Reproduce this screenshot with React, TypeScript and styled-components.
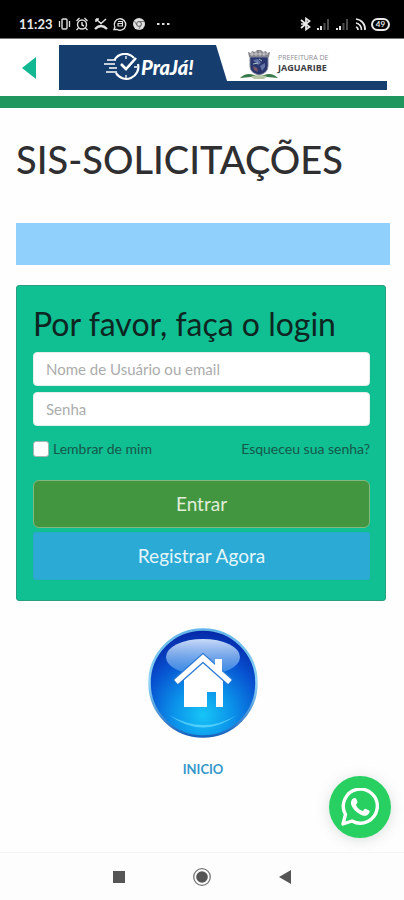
import React from "react";
import styled, { createGlobalStyle } from "styled-components";

const GlobalStyle = createGlobalStyle`
  *, *::before, *::after { box-sizing: border-box; }
  body {
    margin: 0;
    background: #fefefe;
    color: #2f2f31;
    font-family: Lato, "Open Sans", sans-serif;
  }
`;

const Screen = styled.div`
  min-height: 100vh;
  display: flex;
  flex-direction: column;
`;

const StatusBar = styled.div`
  height: 39px;
  padding: 10px 14px 0 19px;
  display: flex;
  align-items: center;
  justify-content: space-between;
  background: #000;
  border-bottom: 1px solid #777;
  color: #e8e8e8;
`;

const StatusGroup = styled.div<{ $gap: number }>`
  display: flex;
  align-items: center;
  gap: ${(p) => p.$gap}px;
`;

const Clock = styled.time`
  font: 700 13px/16px Lato, sans-serif;
`;

const Header = styled.header`
  height: 69px;
  padding: 6px 17px 0 20px;
  display: flex;
  gap: 21px;
  background: #fff;
  border-bottom: 12px solid #20965f;
`;

const BackButton = styled.button`
  width: 18px;
  height: 45px;
  padding: 0;
  border: 0;
  background: none;
  display: flex;
  align-items: center;
`;

const Banner = styled.a`
  flex: 1;
  height: 45px;
  display: flex;
  background: #fff;
  border-bottom: 9px solid #153e6f;
  text-decoration: none;
`;

const Brand = styled.span`
  flex: 0 0 168px;
  padding: 8px 0 0 44px;
  display: flex;
  align-items: center;
  gap: 1px;
  background: #153e6f;
  clip-path: polygon(0 0, 157px 0, 100% 100%, 0 100%);
  color: #fff;
`;

const BrandName = styled.span`
  font: italic 900 20px/28px Lato, sans-serif;
`;

const City = styled.span`
  padding: 5px 0 0 13px;
  display: flex;
  align-items: flex-start;
`;

const CityName = styled.span`
  padding-top: 4px;
  display: flex;
  flex-direction: column;
  font: 700 9px/12px "Open Sans", sans-serif;
  color: #3c3c44;
  white-space: nowrap;
`;

const CityKind = styled.span`
  font: 400 7px/10px "Open Sans", sans-serif;
  height: 8px;
  line-height: 8px;
  color: #8d8d95;
`;

const Main = styled.main`
  flex: 1;
  padding: 27px 14px 14px 16px;
  display: flex;
  flex-direction: column;
`;

const PageTitle = styled.h1`
  margin: 0;
  font: 500 38px/48px Lato, sans-serif;
  color: #2f2f31;
  white-space: nowrap;
`;

const Notice = styled.div`
  height: 42px;
  margin-top: 40px;
  background: #8fd0fc;
`;

const LoginCard = styled.form`
  margin: 20px 4px 0 0;
  padding: 18px 15px 20px 16px;
  display: flex;
  flex-direction: column;
  background: #10bf92;
  border: 1px solid #26a07e;
  border-radius: 3px;
`;

const CardTitle = styled.h2`
  margin: 0 0 8px;
  font: 400 32px/40px Lato, sans-serif;
  color: #0d2622;
  white-space: nowrap;
`;

const Field = styled.input`
  width: 100%;
  height: 34px;
  margin-bottom: 6px;
  padding: 0 12px;
  border: 1px solid #e4efea;
  border-radius: 4px;
  background: #fff;
  font: 400 15px/20px Lato, sans-serif;
  color: #333;
  &::placeholder { color: #acacac; opacity: 1; }
`;

const Options = styled.div`
  margin: 6px 0 20px;
  height: 22px;
  display: flex;
  align-items: center;
  justify-content: space-between;
  font: 400 14px/18px Lato, sans-serif;
  color: #15584a;
`;

const Remember = styled.label`
  display: flex;
  align-items: center;
  gap: 4px;
`;

const CheckBox = styled.input`
  appearance: none;
  width: 16px;
  height: 16px;
  margin: 0;
  border: 1px solid #a6b5b0;
  border-radius: 3px;
  background: #fff;
  &:checked { background: #15584a; }
`;

const ForgotLink = styled.a`
  color: inherit;
  text-decoration: none;
`;

const ActionButton = styled.button<{ $primary?: boolean }>`
  height: 48px;
  margin-top: ${(p) => (p.$primary ? 0 : 4)}px;
  border: 1px solid ${(p) => (p.$primary ? "#82b97d" : "#2aa9c8")};
  border-radius: ${(p) => (p.$primary ? 6 : 2)}px;
  background: ${(p) => (p.$primary ? "#439640" : "#2aaad4")};
  color: ${(p) => (p.$primary ? "#e0eeda" : "#e4f5fb")};
  font: 400 19px/24px Lato, sans-serif;
`;

const HomeLink = styled.a`
  align-self: center;
  margin-top: 26px;
  display: flex;
  flex-direction: column;
  align-items: center;
  gap: 21px;
  font: 700 13px/18px Lato, sans-serif;
  color: #3598cb;
  text-decoration: none;
`;

const ChatButton = styled.a`
  position: fixed;
  right: 13px;
  bottom: 62px;
  width: 62px;
  height: 62px;
  display: flex;
  align-items: center;
  justify-content: center;
  border-radius: 50%;
  background: #28d062;
  box-shadow: 0 2px 14px rgba(60, 80, 80, 0.18);
`;

const NavBar = styled.nav`
  height: 48px;
  display: flex;
  align-items: center;
  justify-content: center;
  gap: 65px;
  background: #fdfdfd;
  border-top: 1px solid #f5f5f5;
`;

const NavButton = styled.button`
  width: 18px;
  height: 20px;
  padding: 0;
  border: 0;
  background: none;
  display: flex;
  align-items: center;
  justify-content: center;
`;

const Signal = () => (
  <svg width="15" height="13" viewBox="0 0 15 13" aria-hidden="true">
    <path d="M2 12v-2M5 12V8" stroke="#e8e8e8" strokeWidth="2" />
    <path d="M8.500 12V5M12 12V1" stroke="#4c4c4c" strokeWidth="2" />
  </svg>
);

const StatusLeftIcons = () => (
  <svg width="116" height="16" viewBox="0 0 116 16" fill="none" stroke="#e0e0e0" strokeWidth="1.400" aria-hidden="true">
    <rect x="6" y="3" width="5" height="10" rx="1" />
    <path d="M3.500 5v6M13.500 5v6" strokeWidth="1.300" />
    <circle cx="26" cy="8.500" r="4.500" />
    <path d="M26 6v3l2 1M20.500 5l3-3M31.500 5l-3-3M22.500 12l-2 2M29.500 12l2 2" />
    <path d="M39 13q6-6 12 0" strokeWidth="2.400" />
    <path d="M40 3l5 4.500L50 3M40 3h3M40 3v3" strokeWidth="1.500" />
    <path d="M58 13.500l.9-2.400a5.700 5.700 0 1 1 2.300 2.400z" />
    <path d="M62 5.500h4.500v2H62v2.500h4.500V7.500" strokeWidth="1.200" />
    <circle cx="83" cy="8" r="6" fill="#e0e0e0" stroke="none" />
    <circle cx="83" cy="8" r="2.400" fill="#e0e0e0" stroke="#555" strokeWidth="1" />
    <path d="M83 5.500h5M80.800 9.200L78.500 5M85 9.500l-2.500 4" stroke="#666" strokeWidth=".8" />
    <path d="M101 8h2.500M106 8h2.500M111 8h2.500" strokeWidth="2" />
  </svg>
);

const BluetoothIcon = () => (
  <svg width="12" height="14" viewBox="0 0 12 14" fill="none" stroke="#e8e8e8" strokeWidth="1.700" aria-hidden="true">
    <path d="M1 3l8.500 7L6 12.500v-11L9.500 4 1 11M1 7h4" />
  </svg>
);

const CastIcon = () => (
  <svg width="13" height="13" viewBox="0 0 13 13" fill="none" stroke="#e8e8e8" strokeWidth="1.700" aria-hidden="true">
    <path d="M2 1a10 10 0 0 1 9 11M2 5a6.500 6.500 0 0 1 5.500 7M2 9a3 3 0 0 1 2 3" />
  </svg>
);

const Battery = styled.span`
  width: 19px;
  height: 13px;
  display: flex;
  align-items: center;
  justify-content: center;
  border: 2px solid #e8e8e8;
  border-radius: 7px;
  font: 700 8px/9px Lato, sans-serif;
`;

const FastClock = () => (
  <svg width="37" height="28" viewBox="0 0 37 28" fill="none" stroke="#fff" aria-hidden="true">
    <path d="M11.500 7A12 12 0 0 1 31 5M35 11A12 12 0 0 1 13 20" strokeWidth="2.200" />
    <path d="M4 7h9M1 11h11M6 15h8M3 19h11" strokeWidth="1.500" />
    <path d="M18 11l5 5L33 5" strokeWidth="2.600" />
    <path d="M23 3v3M23 22v3M31 14h3" strokeWidth="1.300" />
  </svg>
);

const CoatOfArms = () => (
  <svg width="38" height="30" viewBox="0 0 38 30" aria-hidden="true">
    <path d="M9 7L8 2l3 1 1-2 3 1 2-2h4l2 2 3-1 1 2 3-1-1 5z" fill="#85858b" />
    <path d="M10 4h18M12 2v4M16 1v5M20 1v5M24 2v4" stroke="#dadadd" strokeWidth=".8" />
    <path d="M10 7h18v9q0 7-9 9-9-2-9-9z" fill="#29356d" stroke="#7d8397" />
    <path d="M13 10l5-1 3 4-3 2zM20 16l5-3v4l-3 4z" fill="#6574a7" />
    <path d="M13 16l4 2 1 4-4-2z" fill="#7d5968" />
    <path d="M19 9l3 2M13 14l5-1" stroke="#a7c2c5" />
    <path d="M0 28q6-6 14-3l5 2 5-2q8-3 14 3l-11-1-8 2-8-2z" fill="#397a4a" />
    <path d="M11 26l8-1 8 1-3 3H14z" fill="#b5c6a4" />
  </svg>
);

const HomeOrb = () => (
  <svg width="112" height="112" viewBox="0 0 112 112" aria-hidden="true">
    <defs>
      <radialGradient id="orb" cx="50%" cy="80%" r="80%">
        <stop offset="0" stopColor="#16c5f6" />
        <stop offset=".35" stopColor="#0b91ea" />
        <stop offset=".7" stopColor="#0750cf" />
        <stop offset="1" stopColor="#0526a5" />
      </radialGradient>
      <linearGradient id="gloss" x1="0" y1="0" x2="0" y2="1">
        <stop offset="0" stopColor="#d4e3fc" stopOpacity=".95" />
        <stop offset="1" stopColor="#4f9bea" stopOpacity=".6" />
      </linearGradient>
      <linearGradient id="rim" x1="0" y1="0" x2="0" y2="1">
        <stop offset="0" stopColor="#62b5e8" />
        <stop offset=".5" stopColor="#90d5f5" />
        <stop offset="1" stopColor="#1762bd" />
      </linearGradient>
    </defs>
    <circle cx="56" cy="56" r="53.500" fill="url(#orb)" stroke="url(#rim)" strokeWidth="2.500" />
    <ellipse cx="56" cy="30" rx="37" ry="18" fill="url(#gloss)" />
    <path d="M22 88q34 25 68 0-33 20-68 0z" fill="#64d9ff" opacity=".75" />
    <path d="M37 51L56 34l20 17v29h-7V65h-9v15H37z" fill="#fff" />
    <path d="M29 55l27-24 27 24" fill="none" stroke="#2b79d5" strokeWidth="8" />
    <path d="M29 55l27-24 27 24" fill="none" stroke="#fff" strokeWidth="5.500" />
    <path d="M68 32h7v15l-7-6z" fill="#fff" />
  </svg>
);

const WhatsAppIcon = () => (
  <svg width="38" height="38" viewBox="0 0 38 38" fill="none" aria-hidden="true">
    <path d="M2 36l2.500-9.500A17 17 0 1 1 11 33z" stroke="#fff" strokeWidth="3.400" strokeLinejoin="round" />
    <path d="M14 10c1 0 1.500 1 2.500 4 .4 1-1.500 2-1.500 3 1 3 4 5 6.500 6 1 0 2-2.500 3-2.200l4 2c.7 1-1 4.500-4 5C18 28 9 19 10 14c.5-2.500 2-4 4-4z" fill="#fff" />
  </svg>
);

export default function App() {
  return (
    <>
      <GlobalStyle />
      <Screen>
        <StatusBar>
          <StatusGroup $gap={3}>
            <Clock>11:23</Clock>
            <StatusLeftIcons />
          </StatusGroup>
          <StatusGroup $gap={4}>
            <BluetoothIcon />
            <Signal />
            <Signal />
            <CastIcon />
            <Battery>49</Battery>
          </StatusGroup>
        </StatusBar>
        <Header>
          <BackButton type="button" aria-label="Voltar">
            <svg width="18" height="22" viewBox="0 0 18 22" aria-hidden="true">
              <path d="M2 11L16 0v22z" fill="#12b892" />
            </svg>
          </BackButton>
          <Banner href="#">
            <Brand>
              <FastClock />
              <BrandName>PraJá!</BrandName>
            </Brand>
            <City>
              <CoatOfArms />
              <CityName>
                <CityKind>PREFEITURA DE</CityKind>
                <span>JAGUARIBE</span>
              </CityName>
            </City>
          </Banner>
        </Header>
        <Main>
          <PageTitle>SIS-SOLICITAÇÕES</PageTitle>
          <Notice />
          <LoginCard onSubmit={(e) => e.preventDefault()}>
            <CardTitle>Por favor, faça o login</CardTitle>
            <Field type="text" placeholder="Nome de Usuário ou email" aria-label="Nome de Usuário ou email" />
            <Field type="password" placeholder="Senha" aria-label="Senha" />
            <Options>
              <Remember>
                <CheckBox type="checkbox" />
                Lembrar de mim
              </Remember>
              <ForgotLink href="#">Esqueceu sua senha?</ForgotLink>
            </Options>
            <ActionButton type="submit" $primary>Entrar</ActionButton>
            <ActionButton type="button">Registrar Agora</ActionButton>
          </LoginCard>
          <HomeLink href="#">
            <HomeOrb />
            INICIO
          </HomeLink>
        </Main>
        <NavBar>
          <NavButton type="button" aria-label="Recentes">
            <svg width="12" height="12" viewBox="0 0 12 12"><path d="M0 0h12v12H0z" fill="#555" /></svg>
          </NavButton>
          <NavButton type="button" aria-label="Tela inicial">
            <svg width="18" height="18" viewBox="0 0 18 18">
              <circle cx="9" cy="9" r="8.300" fill="none" stroke="#777" strokeWidth="1.300" />
              <circle cx="9" cy="9" r="5.800" fill="#555" />
            </svg>
          </NavButton>
          <NavButton type="button" aria-label="Voltar">
            <svg width="12" height="14" viewBox="0 0 12 14"><path d="M0 7l12-7v14z" fill="#555" /></svg>
          </NavButton>
        </NavBar>
        <ChatButton href="#" aria-label="WhatsApp">
          <WhatsAppIcon />
        </ChatButton>
      </Screen>
    </>
  );
}
